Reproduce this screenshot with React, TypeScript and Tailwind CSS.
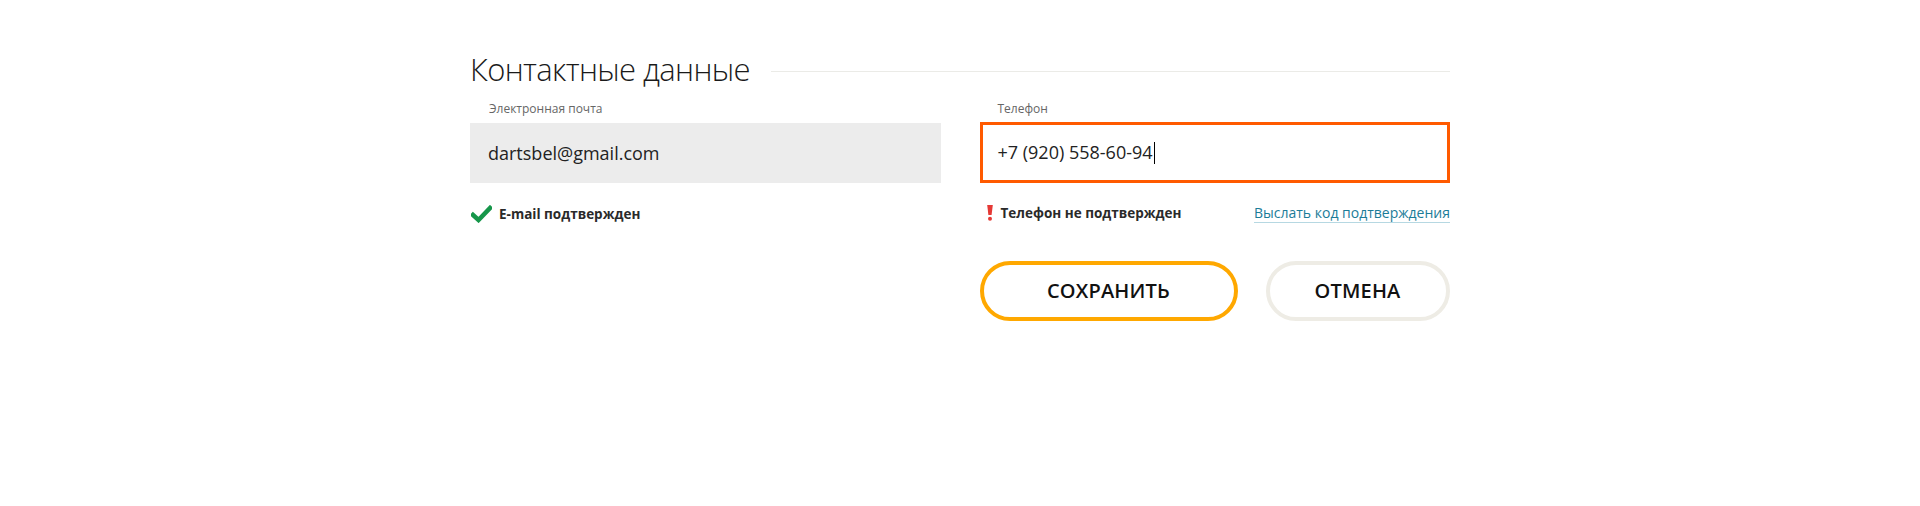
import React from "react";

export default function App() {
  return (
    <div className="w-full h-[506px] bg-white" style={{ fontFamily: '"Open Sans", "Liberation Sans", sans-serif' }}>
      <div className="w-[980px] mx-auto pt-[47px]">
        <div className="flex items-center">
          <h2
            className="text-[31px] leading-[44px] font-light tracking-[-0.6px] text-[#1a1a1a] whitespace-nowrap"
            style={{ fontFamily: '"Open Sans Light", "Open Sans", "Liberation Sans", sans-serif' }}
          >
            Контактные данные
          </h2>
          <div className="flex-1 h-px bg-[#ebebe7] ml-[21px] mt-[4px]" />
        </div>
        <div className="grid grid-cols-2 gap-x-[39px] mt-[10px]">
          <div>
            <div className="pl-[19px] text-[12px] leading-[15px] text-[#666]">Электронная почта</div>
            <div className="mt-[7px] h-[60px] bg-[#ececec] flex items-center px-[18px] text-[18px] text-[#222]">
              dartsbel@gmail.com
            </div>
            <div className="mt-[21px] h-[20px] flex items-center">
              <svg width="21" height="18" viewBox="0 0 21 18" className="ml-[1px]">
                <path d="M2 10 L7.5 15 L19 3" fill="none" stroke="#16964a" strokeWidth="4.5" strokeLinecap="square" />
              </svg>
              <span className="ml-[7px] text-[13.5px] font-bold text-[#2a2a2a]">E-mail подтвержден</span>
            </div>
          </div>
          <div>
            <div className="pl-[18px] text-[12px] leading-[15px] text-[#666]">Телефон</div>
            <div className="mt-[6px] h-[61px] border-[3px] border-[#ff5a00] flex items-center px-[15px] text-[18px] text-[#222]">
              <span>+7 (920) 558-60-94</span>
              <span className="inline-block w-px h-[22px] bg-black ml-[1px]" />
            </div>
            <div className="mt-[20px] h-[20px] flex items-center">
              <svg width="8" height="16" viewBox="0 0 8 16" className="ml-[6px]">
                <path d="M1.2 0 H6.8 L5.6 10 H2.4 Z" fill="#e53935" />
                <circle cx="4" cy="13.8" r="2" fill="#e53935" />
              </svg>
              <span className="ml-[7px] text-[13.5px] font-bold text-[#2a2a2a]">Телефон не подтвержден</span>
              <a className="ml-auto text-[14px] leading-[18px] text-[#1b7c98] border-b border-[#b6d8e2] whitespace-nowrap cursor-pointer">
                Выслать код подтверждения
              </a>
            </div>
            <div className="mt-[38px] flex gap-[28px]">
              <button className="w-[258px] h-[60px] rounded-full border-[4px] border-[#ffa800] bg-white text-[20px] font-semibold text-[#111] tracking-[0.2px]">
                СОХРАНИТЬ
              </button>
              <button className="w-[184px] h-[60px] rounded-full border-[4px] border-[#eeece5] bg-white text-[20px] font-semibold text-[#111] tracking-[0.2px]">
                ОТМЕНА
              </button>
            </div>
          </div>
        </div>
      </div>
    </div>
  );
}
